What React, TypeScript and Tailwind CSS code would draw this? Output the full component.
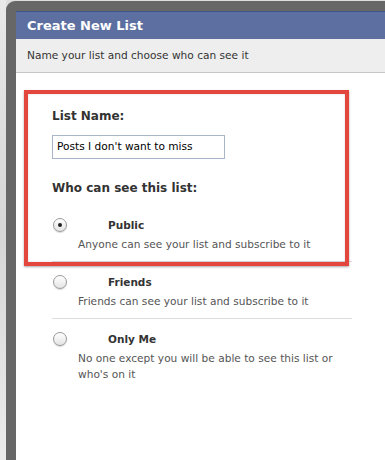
import React from 'react';

const options = [
  { id: 'public', title: 'Public', desc: 'Anyone can see your list and subscribe to it' },
  { id: 'friends', title: 'Friends', desc: 'Friends can see your list and subscribe to it' },
  { id: 'only-me', title: 'Only Me', desc: "No one except you will be able to see this list or who's on it" },
];

const Radio = ({ checked }: { checked: boolean }) => (
  <span className="w-[14px] h-[14px] rounded-full border border-[#9a9a9a] bg-gradient-to-b from-[#ffffff] to-[#e4e4e4] shadow-[0_1px_1px_rgba(0,0,0,0.15)] flex items-center justify-center">
    {checked && <span className="w-[4px] h-[4px] rounded-full bg-[#222]" />}
  </span>
);

export default function App() {
  return (
    <div className="w-[385px] h-[460px] flex bg-[#dedede] overflow-hidden font-['DejaVu_Sans',sans-serif]">
      {/* blurred page behind the dialog */}
      <div className="w-[6px] bg-gradient-to-b from-[#e9e9e9] via-[#d6d6d6] to-[#ececec]" />

      {/* dialog frame */}
      <div className="flex-1 mt-px bg-[#676767] rounded-tl-[9px] pl-[10px] pt-[10px]">
        <div className="h-full bg-white flex flex-col">
          <div className="h-[28px] bg-[#5c6fa0] border-t border-[#3f568c] px-[11px] flex items-center text-white font-bold text-[13px]">
            Create New List
          </div>
          <div className="h-[34px] bg-[#eeeeee] border-b border-[#c6c6c6] px-[11px] flex items-center text-[10.6px] text-[#333]">
            Name your list and choose who can see it
          </div>

          <div className="relative pl-[36px] w-[336px] pt-[35px]">
            <div className="text-[12px] font-bold text-[#333] leading-[16px]">List Name:</div>
            <div className="mt-[11px] w-[173px] h-[24px] border border-[#a9b5c9] px-[4px] flex items-center text-[10.6px] text-black">
              Posts I don't want to miss
            </div>
            <div className="mt-[21px] text-[12px] font-bold text-[#333] leading-[16px]">Who can see this list:</div>

            <div className="mt-[9px] flex flex-col">
              {options.map((o, i) => (
                <div
                  key={o.id}
                  className={`flex pt-[12px] pb-[9px] ${i < options.length - 1 ? 'border-b border-[#dddddd]' : ''}`}
                >
                  <div className="w-[26px] pl-px pt-[1px] shrink-0">
                    <Radio checked={i === 0} />
                  </div>
                  <div className="flex flex-col">
                    <div className="pl-[30px] text-[10.5px] font-bold text-[#333] leading-[16px]">{o.title}</div>
                    <div className="mt-[3px] text-[10.6px] text-[#555] leading-[16px] w-[265px]">{o.desc}</div>
                  </div>
                </div>
              ))}
            </div>

            {/* annotation highlight */}
            <div className="absolute left-[8px] top-[17px] w-[325px] h-[176px] border-[4px] border-[#e2463d] shadow-[0_1px_2px_rgba(0,0,0,0.35),inset_0_0_2px_rgba(0,0,0,0.2)] pointer-events-none" />
          </div>
        </div>
      </div>
    </div>
  );
}
